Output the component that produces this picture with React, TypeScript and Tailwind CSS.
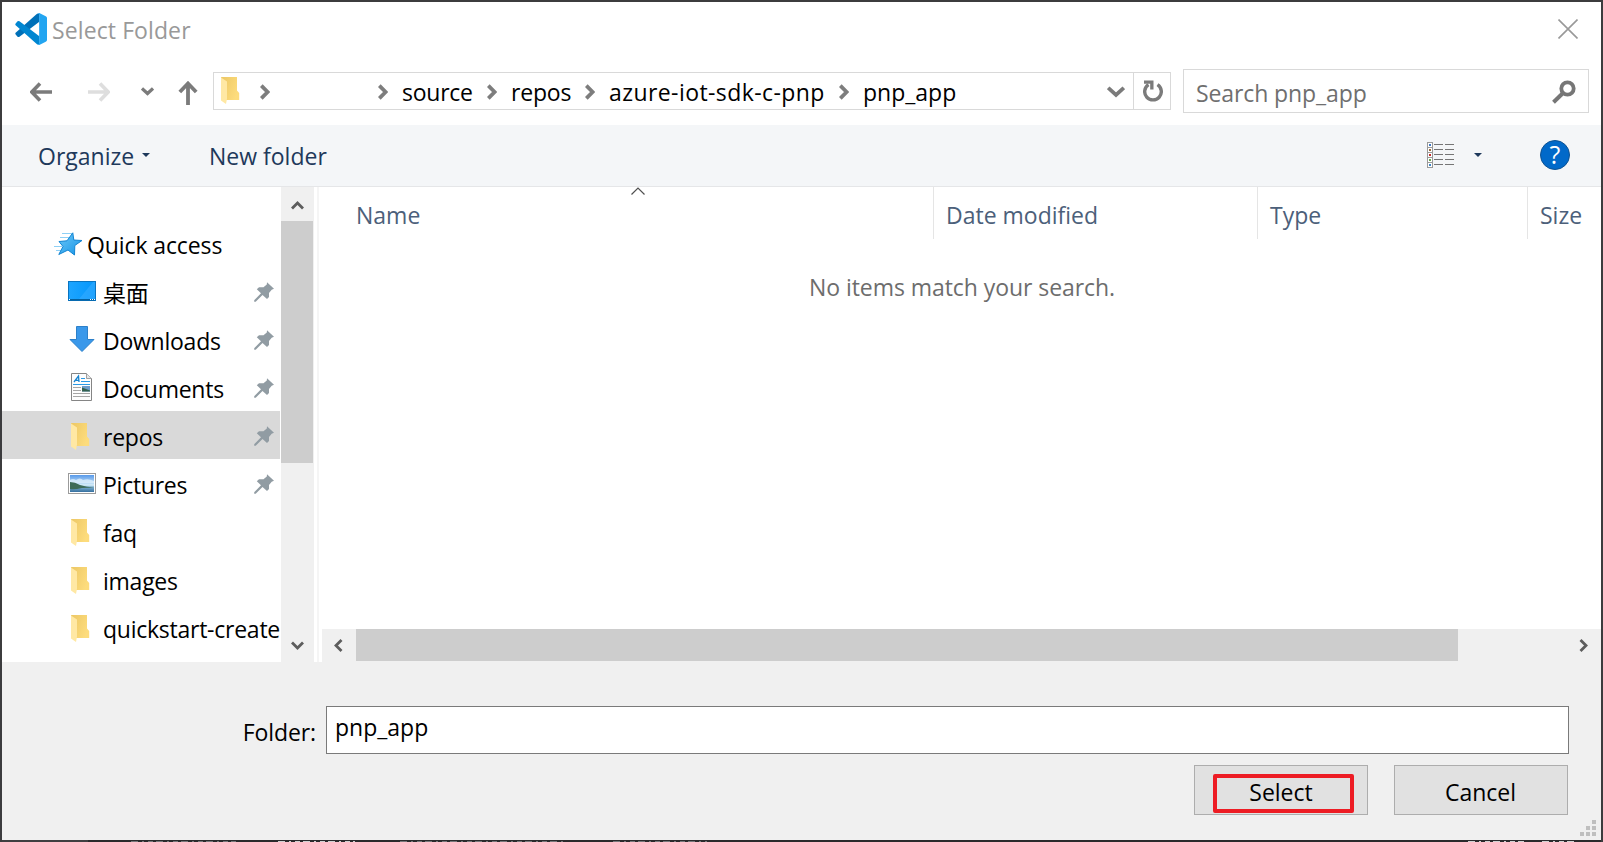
import type { ReactNode } from "react";

function VSCodeLogo() {
  return (
    <svg width="32" height="32" viewBox="0 0 100 100" className="mb-0.5 shrink-0">
      <path d="M2 67 L8 74 Q11 76 14 74 L76 27 V3 Q72 -1 67 4 L2 62 Q0 64 2 67Z" fill="#0070b8" />
      <path d="M2 33 L8 26 Q11 24 14 26 L76 73 V97 Q72 101 67 96 L2 38 Q0 36 2 33Z" fill="#0086d1" />
      <path d="M76 0 L96 10 Q100 12 100 16 V84 Q100 88 96 90 L76 100 Q73 100.500 70 98 Q75 100 75.500 94 V6 Q75 0 70 2 Q73 -1 76 0Z" fill="#22a5f1" />
    </svg>
  );
}

function FolderIcon() {
  return (
    <svg width="20" height="28" viewBox="0 0 20 28" className="shrink-0">
      <defs>
        <linearGradient id="folderBack" x1="0" y1="0" x2="1" y2="0.500">
          <stop offset="0" stopColor="#ecc765" />
          <stop offset="1" stopColor="#fddc7c" />
        </linearGradient>
      </defs>
      <path d="M0 0 H16 V13.500 L18.200 16 V23 H5 Z" fill="url(#folderBack)" />
      <path d="M0 0.500 L6 4.500 V21.500 L5 27 L0 23.500 Z" fill="#ffe8a4" />
    </svg>
  );
}

function StarIcon() {
  return (
    <svg width="30" height="24" viewBox="0 0 30 24" className="shrink-0">
      <defs>
        <linearGradient id="star" x1="0" y1="0" x2="1" y2="1">
          <stop offset="0" stopColor="#6cc8f8" />
          <stop offset="1" stopColor="#1593e6" />
        </linearGradient>
      </defs>
      <path d="M9 1.500 H19 M7 5.500 H17 M1 14.500 H9 M3 18.500 H8" stroke="#8fd0f5" strokeWidth="1.200" />
      <path d="M19.800 0.800 L20.800 8 L29 8.500 L21.800 13.500 L21.500 23 L15 18 L5.800 22.500 L10 14.500 L6 9.500 L14 8.800 Z" fill="url(#star)" stroke="#1284d2" strokeWidth="1" />
    </svg>
  );
}

function DesktopIcon() {
  return (
    <svg width="28" height="20" viewBox="0 0 28 20">
      <defs>
        <linearGradient id="desk" x1="0" y1="0" x2="1" y2="0">
          <stop offset="0" stopColor="#1ea5ff" />
          <stop offset="1" stopColor="#0496fb" />
        </linearGradient>
      </defs>
      <rect x="0.500" y="0.500" width="27" height="19" fill="url(#desk)" stroke="#0a74c0" />
      <path d="M11 18 L25 1 H27 V18Z" fill="#35abff" opacity="0.600" />
      <rect x="1" y="18" width="26" height="1.500" fill="#05619f" />
      <path d="M1 18.500 H2 M22 18.500 H23 M24 18.500 H25 M26 18.500 H27" stroke="#fff" />
    </svg>
  );
}

function DownloadIcon() {
  return (
    <svg width="26" height="26" viewBox="0 0 26 26">
      <path d="M7.500 0.500 H18.500 V13.500 H25 L13 25.500 L1 13.500 H7.500Z" fill="#3a98ea" stroke="#2d80c9" />
    </svg>
  );
}

function DocumentIcon() {
  return (
    <svg width="22" height="28" viewBox="0 0 22 28">
      <path d="M0.500 0.500 H15.500 L20.500 5.500 V27.500 H0.500Z" fill="#fdfdfd" stroke="#858585" />
      <path d="M15.500 0.500 V5.500 H20.500" fill="#e6e6e6" stroke="#a0a0a0" />
      <path d="M3 9 L7.500 3 L8 9 M5 7.300 H8" fill="none" stroke="#1683cf" strokeWidth="1.300" />
      <path d="M10 5.500 H14 M10 8.500 H19 M2 11.500 H19" stroke="#2b9ae6" />
      <path d="M2 14.500 H10 M2 17.500 H10 M2 20.500 H19 M2 23.500 H19" stroke="#a5a5a5" />
      <rect x="11" y="13" width="8" height="5.500" fill="#6d9cc9" />
      <path d="M11 18.500 V14.500 L19 17.500 V18.500Z" fill="#34614f" />
    </svg>
  );
}

function PicturesIcon() {
  return (
    <svg width="28" height="21" viewBox="0 0 28 21">
      <defs>
        <linearGradient id="sky" x1="0" y1="0" x2="0" y2="1">
          <stop offset="0" stopColor="#5799ea" />
          <stop offset="0.600" stopColor="#d6edf8" />
          <stop offset="0.700" stopColor="#7fb0cf" />
          <stop offset="1" stopColor="#356f9f" />
        </linearGradient>
      </defs>
      <rect x="0.500" y="0.500" width="27" height="20" fill="#fff" stroke="#9b9b9b" />
      <rect x="2" y="2" width="24" height="17" fill="url(#sky)" />
      <path d="M2 7 Q5 5 8 7 Q12 4 15 7 Q20 5 26 8 V10 H2Z" fill="#dcedfa" opacity="0.800" />
      <path d="M2 9 Q7 9 12 12 Q19 14 26 14.500 L14 15 Q6 17 2 16Z" fill="#3d6b57" />
    </svg>
  );
}

function PinIcon() {
  return (
    <svg width="20" height="20" viewBox="0 0 20 20" className="shrink-0">
      <path d="M13 0.300 L20 6.800 L17.700 7.700 L15 11 V15 L13 17 L8.500 13 L1.700 19.800 H0.200 V18.200 L7 11.300 L2.800 7.200 L5 5.300 L9.500 5.200 L12.800 2.500Z" fill="#919ca3" />
    </svg>
  );
}

type ChevronProps = { dir: "up" | "down" | "left" | "right"; className?: string };

function ScrollChevron({ dir, className = "" }: ChevronProps) {
  const d = {
    up: "M1 8.500 L6.500 3 L12 8.500",
    down: "M1 3.500 L6.500 9 L12 3.500",
    left: "M8.500 1 L3 6.500 L8.500 12",
    right: "M3.500 1 L9 6.500 L3.500 12",
  }[dir];
  return (
    <svg width="13" height="13" viewBox="0 0 13 13" className={className}>
      <path d={d} fill="none" stroke="#5d5d5d" strokeWidth="2.800" />
    </svg>
  );
}

function CrumbChevron() {
  return (
    <svg width="10" height="16" viewBox="0 0 10 16" className="mt-0.5 shrink-0">
      <path d="M1.300 1.700 L7.600 8 L1.300 14.300" fill="none" stroke="#7d7d7d" strokeWidth="3.800" />
    </svg>
  );
}

function TitleBar() {
  return (
    <div className="flex h-[56px] shrink-0 items-center pl-[13px] pr-[23px]">
      <VSCodeLogo />
      <span className="ml-[5px] flex-1 tracking-[0.1px] text-[#999999]">Select Folder</span>
      <svg width="20" height="20" viewBox="0 0 20 20" className="mb-0.5">
        <path d="M0.500 0.500 L19.500 19.500 M19.500 0.500 L0.500 19.500" stroke="#999" strokeWidth="1.600" />
      </svg>
    </div>
  );
}

function Crumb({ className, children }: { className: string; children?: ReactNode }) {
  return (
    <>
      <CrumbChevron />
      <span className={`mt-0.5 shrink-0 whitespace-nowrap ${className}`}>{children}</span>
    </>
  );
}

function NavBar() {
  return (
    <div className="flex h-[67px] shrink-0 items-start">
      <div className="flex h-[67px] w-[211px] items-start pl-7 pt-[23px]">
        <svg width="22" height="20" viewBox="0 0 22 20" className="mt-px">
          <path d="M22 10 H2 M10 1.500 L1.800 10 L10 18.500" fill="none" stroke="#7b7b7b" strokeWidth="3.600" />
        </svg>
        <svg width="22" height="20" viewBox="0 0 22 20" className="ml-9 mt-px">
          <path d="M0 10 H20 M12 1.500 L20.200 10 L12 18.500" fill="none" stroke="#dedede" strokeWidth="3.600" />
        </svg>
        <svg width="13" height="9" viewBox="0 0 13 9" className="ml-[31px] mt-[6px]">
          <path d="M1 1.500 L6.500 6.500 L12 1.500" fill="none" stroke="#7b7b7b" strokeWidth="3.200" />
        </svg>
        <svg width="20" height="24" viewBox="0 0 20 24" className="ml-[24px]">
          <path d="M10 24 V2.500 M1.800 11 L10 2.500 L18.200 11" fill="none" stroke="#7b7b7b" strokeWidth="3.800" />
        </svg>
      </div>
      <div className="mt-[14px] flex h-[38px] w-[958px] border border-[#d9d9d9]">
        <div className="flex flex-1 items-center pl-[7px] text-black">
          <FolderIcon />
          <span className="w-[19px]" />
          <Crumb className="w-[108px]" />
          <Crumb className="w-[99px] pl-3.5 tracking-[-0.25px]">source</Crumb>
          <Crumb className="w-[88px] pl-3.5 tracking-[-0.2px]">repos</Crumb>
          <Crumb className="w-[244px] pl-3.5 tracking-[0.42px]">azure-iot-sdk-c-pnp</Crumb>
          <Crumb className="flex-1 pl-3.5">pnp_app</Crumb>
          <svg width="18" height="12" viewBox="0 0 18 12" className="mr-2 mt-0.5">
            <path d="M1.200 1.800 L9 9 L16.800 1.800" fill="none" stroke="#7b7b7b" strokeWidth="3.800" />
          </svg>
        </div>
        <div className="flex w-[37px] items-center justify-center border-l border-[#d9d9d9] pl-0.5">
          <svg width="20" height="22" viewBox="0 0 20 22">
            <path d="M14.500 4.600 A8.300 8.300 0 1 1 5.500 4.600" fill="none" stroke="#7b7b7b" strokeWidth="3.400" />
            <path d="M1 0.500 H10.500 V9.500 H7.200 V3.800 H1Z" fill="#7b7b7b" />
          </svg>
        </div>
      </div>
      <div className="ml-3 mt-[11px] flex h-11 w-[406px] items-center border border-[#d9d9d9] pl-[12px] pr-3">
        <span className="mt-[3px] flex-1 tracking-[-0.1px] text-[#6f6f6f]">Search pnp_app</span>
        <svg width="24" height="24" viewBox="0 0 24 24" className="mt-px">
          <circle cx="15.500" cy="8.500" r="6.200" fill="none" stroke="#767676" strokeWidth="3.800" />
          <path d="M11 13 L1.500 22.200" stroke="#767676" strokeWidth="4" />
        </svg>
      </div>
    </div>
  );
}

function ViewIcon() {
  const accents = ["#3d78c4", "#9b6b3f", "#c22b2b", "#6aa84f", "#3d85c6"];
  return (
    <svg width="28" height="26" viewBox="0 0 28 26" className="mb-0.5">
      {accents.map((color, i) => (
        <g key={color}>
          <rect x="0.500" y={0.5 + i * 5} width="5" height="5" fill="#fff" stroke="#9a9a9a" />
          <rect x="2" y={2 + i * 5} width="2" height="2" fill={color} />
          <path d={`M7 ${2.5 + i * 5} H16 M18 ${2.5 + i * 5} H27`} stroke="#757575" />
        </g>
      ))}
    </svg>
  );
}

function Caret() {
  return (
    <svg width="8" height="4" viewBox="0 0 8 4">
      <path d="M0 0 H8 L4 4Z" fill="#1e395b" />
    </svg>
  );
}

function Toolbar() {
  return (
    <div className="flex h-[62px] shrink-0 items-center border-b border-[#e5e6e8] bg-[#f4f6f8] pl-9 text-[#1e395b]">
      <span className="w-[95px]">Organize</span>
      <span className="mb-0.5 ml-[9px] mr-[59px] flex"><Caret /></span>
      <span className="flex-1">New folder</span>
      <ViewIcon />
      <span className="mb-px ml-[19px]"><Caret /></span>
      <div className="mb-0.5 ml-[58px] mr-[31px] flex size-[30px] items-center justify-center rounded-full border border-[#0d5293] bg-[#0169c9] text-[25px] leading-none text-white">
        ?
      </div>
    </div>
  );
}

type Item = { label: string; icon: ReactNode; pinned?: boolean; selected?: boolean; folder?: boolean };

const items: Item[] = [
  { label: "桌面", icon: <DesktopIcon />, pinned: true },
  { label: "Downloads", icon: <DownloadIcon />, pinned: true },
  { label: "Documents", icon: <DocumentIcon />, pinned: true },
  { label: "repos", icon: <FolderIcon />, pinned: true, selected: true, folder: true },
  { label: "Pictures", icon: <PicturesIcon />, pinned: true },
  { label: "faq", icon: <FolderIcon />, folder: true },
  { label: "images", icon: <FolderIcon />, folder: true },
  { label: "quickstart-create", icon: <FolderIcon />, folder: true },
];

function Sidebar() {
  return (
    <div className="flex w-[315px] shrink-0 bg-white">
      <div className="w-[279px] overflow-hidden pt-8 text-black">
        <div className="flex h-12 items-center pl-[51px]">
          <span className="mt-px"><StarIcon /></span>
          <span className="ml-[4px] mt-[3px] whitespace-nowrap tracking-[-0.1px]">Quick access</span>
        </div>
        {items.map((item) => (
          <div
            key={item.label}
            className={`mr-px flex h-12 items-center pl-[66px] ${item.selected ? "bg-[#d9d9d9]" : ""}`}
          >
            <span className={`flex w-7 shrink-0 ${item.folder ? "mt-1 pl-[3px]" : "justify-center"}`}>
              {item.icon}
            </span>
            <span className="ml-[7px] mt-[3px] flex-1 whitespace-nowrap tracking-[-0.25px]">{item.label}</span>
            {item.pinned && <span className="mr-[6px] mt-px"><PinIcon /></span>}
          </div>
        ))}
      </div>
      <div className="flex w-[33px] flex-col items-center bg-[#f0f0f0]">
        <div className="flex h-[34px] items-center pt-1"><ScrollChevron dir="up" /></div>
        <div className="mr-px h-[242px] w-8 bg-[#cdcdcd]" />
        <div className="flex-1" />
        <div className="flex h-[34px] items-center pt-px"><ScrollChevron dir="down" /></div>
      </div>
    </div>
  );
}

function FileList() {
  return (
    <div className="flex min-w-0 flex-1 flex-col bg-white">
      <div className="relative flex h-[52px] text-[#4c607a]">
        <div className="flex w-[614px] items-center border-r border-[#e5e5e5] pl-9">
          <span className="mt-1">Name</span>
        </div>
        <div className="flex w-[324px] items-center border-r border-[#e5e5e5] pl-3">
          <span className="mt-1">Date modified</span>
        </div>
        <div className="flex w-[270px] items-center border-r border-[#e5e5e5] pl-3">
          <span className="mt-1">Type</span>
        </div>
        <div className="flex items-center pl-3">
          <span className="mt-1">Size</span>
        </div>
        <svg width="14" height="8" viewBox="0 0 14 8" className="absolute left-[311px] top-0">
          <path d="M0.500 7.500 L7 1 L13.500 7.500" fill="none" stroke="#505050" strokeWidth="1.200" />
        </svg>
      </div>
      <div className="flex-1 pl-[489px] pt-[33px] text-[#6d6d6d]">
        <span className="tracking-[-0.06px]">No items match your search.</span>
      </div>
      <div className="ml-[2px] flex h-[33px] shrink-0 items-start bg-[#f0f0f0]">
        <div className="flex h-[33px] w-[34px] items-center justify-center"><ScrollChevron dir="left" /></div>
        <div className="h-8 w-[1102px] bg-[#cdcdcd]" />
        <div className="flex-1" />
        <div className="flex h-[33px] w-[35px] items-center justify-center"><ScrollChevron dir="right" /></div>
      </div>
    </div>
  );
}

function ResizeGrip() {
  return (
    <svg width="16" height="16" viewBox="0 0 16 16" className="absolute bottom-1 right-[5px]">
      <path
        d="M12 0h4v4h-4z M6 6h4v4h-4z M12 6h4v4h-4z M0 12h4v4h-4z M6 12h4v4h-4z M12 12h4v4h-4z"
        fill="#bfbfbf"
      />
    </svg>
  );
}

function Footer() {
  return (
    <div className="relative flex-1 bg-[#f0f0f0] pt-[44px] text-black">
      <div className="flex items-center">
        <span className="mt-[3px] w-[324px] pr-[10px] text-right tracking-[-0.1px]">Folder:</span>
        <div className="flex h-12 w-[1243px] items-center border border-[#7a7a7a] bg-white pb-[6px] pl-[8px]">
          pnp_app
        </div>
      </div>
      <div className="mt-[11px] flex pl-[1192px]">
        <div className="relative flex h-[50px] w-[174px] items-center justify-center border border-[#adadad] bg-[#e1e1e1] pt-[3px]">
          Select
          <div className="absolute left-[18px] top-[8px] h-[39px] w-[141px] rounded-[2px] border-4 border-[#ed1c24]" />
        </div>
        <div className="ml-[26px] flex h-[50px] w-[174px] items-center justify-center border border-[#adadad] bg-[#e1e1e1] pr-px pt-[3px]">
          Cancel
        </div>
      </div>
      <ResizeGrip />
    </div>
  );
}

function DesktopEdge() {
  return (
    <svg width="1599" height="2" viewBox="0 0 1599 2" className="shrink-0">
      <rect width="1599" height="2" fill="#2a2a2c" />
      <rect width="86" height="2" fill="#3f3f41" />
      <g strokeWidth="1" strokeDasharray="7 4 2 4 5 3" fill="none">
        <path d="M129 1.500 H234 M398 1.500 H561 M611 1.500 H705" stroke="#77777a" />
        <path d="M276 1.500 H353 M1466 1.500 H1522 M1540 1.500 H1572" stroke="#d0d0d0" />
      </g>
    </svg>
  );
}

export default function App() {
  return (
    <div className="flex h-[842px] w-[1603px] flex-col overflow-hidden bg-[#3c3c3e] px-[2px] pt-[2px] font-['Open_Sans','Noto_Sans_CJK_SC',sans-serif] text-[23px] leading-[30px]">
      <div className="flex h-[838px] shrink-0 flex-col bg-white">
        <TitleBar />
        <NavBar />
        <Toolbar />
        <div className="flex h-[475px] shrink-0">
          <Sidebar />
          <div className="mr-[1px] w-[2px] bg-[#f5f5f5]" />
          <FileList />
        </div>
        <Footer />
      </div>
      <DesktopEdge />
    </div>
  );
}
